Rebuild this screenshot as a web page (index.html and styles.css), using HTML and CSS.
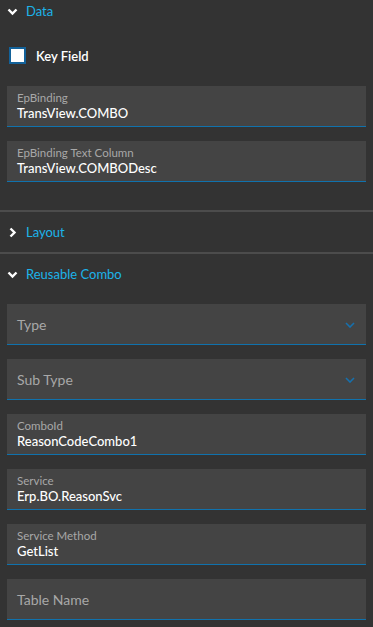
FILE: index.html
```html
<!DOCTYPE html>
<html lang="en">
<head>
 <meta charset="UTF-8">
 <meta name="viewport" content="width=device-width, initial-scale=1.0">
 <title>Properties</title>
 <link rel="stylesheet" href="styles.css">
</head>
<body>
 <!-- Data group -->
 <div class="group-header first">
  <svg class="chev" width="11" height="11" viewBox="0 0 11 11"><path d="M1.5 3.5 L5.5 7.5 L9.5 3.5" /></svg>
  <span>Data</span>
 </div>
 <div class="group-body data-body">
  <label class="check-row">
   <span class="check-box"></span>
   <span>Key Field</span>
  </label>
  <div class="field">
   <div class="field-label">EpBinding</div>
   <div class="field-value">TransView.COMBO</div>
  </div>
  <div class="field">
   <div class="field-label">EpBinding Text Column</div>
   <div class="field-value">TransView.COMBODesc</div>
  </div>
 </div>

 <div class="divider"></div>

 <!-- Layout group -->
 <div class="group-header">
  <svg class="chev" width="11" height="11" viewBox="0 0 11 11"><path d="M3.5 1.5 L7.5 5.5 L3.5 9.5" /></svg>
  <span>Layout</span>
 </div>

 <div class="divider"></div>

 <!-- Reusable combo group -->
 <div class="group-header">
  <svg class="chev" width="11" height="11" viewBox="0 0 11 11"><path d="M1.5 3.5 L5.5 7.5 L9.5 3.5" /></svg>
  <span>Reusable Combo</span>
 </div>
 <div class="group-body combo-body">
  <div class="field empty">
   <div class="field-placeholder">Type</div>
   <svg class="drop" width="10" height="6" viewBox="0 0 10 6"><path d="M1 1 L5 5 L9 1" /></svg>
  </div>
  <div class="field empty">
   <div class="field-placeholder">Sub Type</div>
   <svg class="drop" width="10" height="6" viewBox="0 0 10 6"><path d="M1 1 L5 5 L9 1" /></svg>
  </div>
  <div class="field">
   <div class="field-label">ComboId</div>
   <div class="field-value">ReasonCodeCombo1</div>
  </div>
  <div class="field">
   <div class="field-label">Service</div>
   <div class="field-value">Erp.BO.ReasonSvc</div>
  </div>
  <div class="field">
   <div class="field-label">Service Method</div>
   <div class="field-value">GetList</div>
  </div>
  <div class="field empty">
   <div class="field-placeholder">Table Name</div>
  </div>
 </div>
</body>
</html>
```

FILE: styles.css
```css
body {
margin: 0;
padding: 0;
background: #333333;
font-family: 'Lato', 'Noto Sans', sans-serif;
color: #ffffff;
overflow: hidden;
}

.group-header {
height: 40px;
display: flex;
align-items: center;
gap: 8px;
padding-left: 7px;
color: #1cb3ea;
font-size: 13px;
}

.group-header.first {
height: 22px;
}

.chev path {
fill: none;
stroke: #ffffff;
stroke-width: 2.4;
}

.group-body {
padding: 0 7px;
display: flex;
flex-direction: column;
gap: 14px;
}

.data-body {
padding-top: 25px;
padding-bottom: 28px;
}

.combo-body {
padding-top: 10px;
}

.check-row {
display: flex;
align-items: center;
gap: 10px;
height: 17px;
padding-left: 2px;
margin-bottom: 8px;
font-size: 13px;
font-weight: 600;
}

.check-box {
width: 13px;
height: 13px;
background: #ffffff;
border: 2px solid #13629a;
}

.divider {
height: 2px;
background: #4c4c4c;
}

.field {
position: relative;
height: 40px;
background: #444444;
border-bottom: 1px solid #1072ad;
padding: 0 10px;
display: flex;
flex-direction: column;
justify-content: center;
}

.field-label {
font-size: 11.5px;
color: #a8a8a8;
line-height: 14px;
}

.field-value {
font-size: 13px;
line-height: 17px;
font-weight: 500;
}

.field-placeholder {
font-size: 14px;
color: #a8a8a8;
}

.drop {
position: absolute;
right: 11px;
top: 18px;
}

.drop path {
fill: none;
stroke: #1670ad;
stroke-width: 1.6;
}
```
